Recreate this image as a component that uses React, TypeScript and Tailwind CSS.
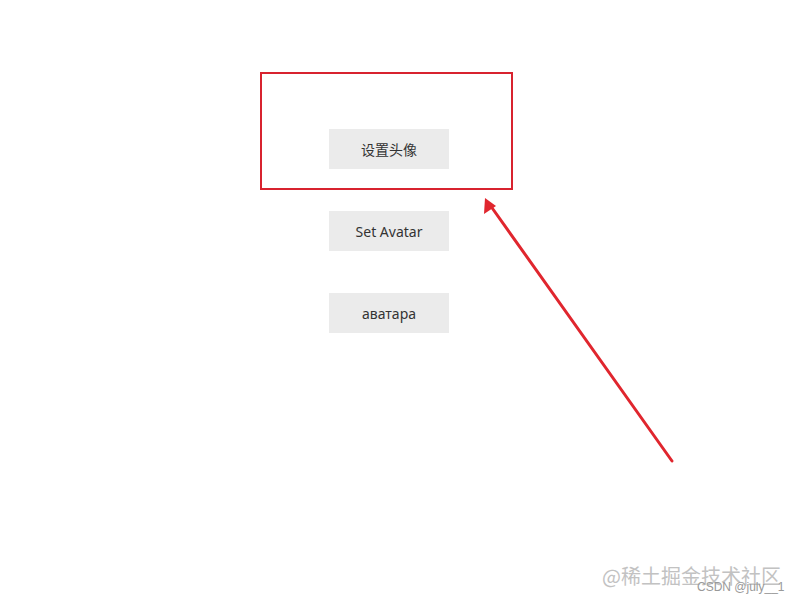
import React from "react";

const labels = ["设置头像", "Set Avatar", "аватара"];

const App = () => {
  return (
    <div className="relative w-[799px] h-[604px] bg-white overflow-hidden font-['Noto_Sans','Noto_Sans_CJK_SC',sans-serif]">
      <div className="flex flex-col gap-[42px] pl-[329px] pt-[129px]">
        {labels.map((label) => (
          <button
            key={label}
            type="button"
            className="w-[120px] h-[40px] bg-[#ebebeb] text-[#333] text-[14px] flex items-center justify-center"
          >
            {label}
          </button>
        ))}
      </div>

      {/* annotation box */}
      <div className="absolute left-[260px] top-[72px] w-[253px] h-[118px] border-2 border-[#d8232f]" />

      {/* annotation arrow */}
      <svg
        className="absolute left-0 top-0"
        width="799"
        height="604"
        viewBox="0 0 799 604"
      >
        <line
          x1="672"
          y1="461"
          x2="490"
          y2="205"
          stroke="#e0262e"
          strokeWidth="3"
          strokeLinecap="round"
        />
        <polygon points="485,198 484,214 496,206" fill="#e0262e" />
      </svg>

      {/* watermarks */}
      <div className="absolute left-[602px] top-[564px] text-[20px] leading-[24px] text-[#c2c2c2] font-['Noto_Sans_CJK_SC',sans-serif]">
        @稀土掘金技术社区
      </div>
      <div className="absolute left-[697px] top-[580px] text-[12px] leading-[14px] text-[#999] font-['Liberation_Sans',sans-serif]">
        CSDN @july__1
      </div>
    </div>
  );
};

export default App;
